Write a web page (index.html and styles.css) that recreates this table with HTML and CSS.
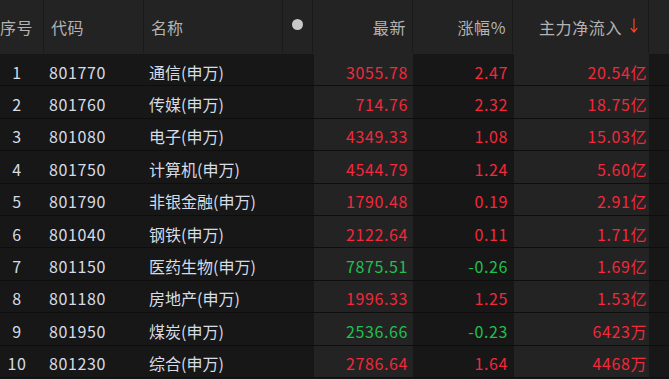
FILE: index.html
```html
<!DOCTYPE html>
<html lang="zh-CN">
<head>
<meta charset="utf-8">
<title>板块资金流向</title>
<link rel="stylesheet" href="styles.css">
</head>
<body>
<div class="board">
  <div class="head">
    <div class="hc c-idx">序号</div>
    <div class="hc c-code">代码</div>
    <div class="hc c-name">名称</div>
    <div class="hc c-dot"><span class="dot"></span></div>
    <div class="hc c-num">最新</div>
    <div class="hc c-num">涨幅%</div>
    <div class="hc c-flow">主力净流入<svg class="arrow" width="8" height="15" viewBox="0 0 8 15"><path d="M4 0.5V14M0.8 10.2L4 14L7.2 10.2" fill="none" stroke="#ff4422" stroke-width="1.2"/></svg></div>
    <div class="hc c-end"></div>
  </div>

  <div class="row"><div class="c c-idx">1</div><div class="c c-code">801770</div><div class="c c-name">通信(申万)</div><div class="c"></div><div class="c c-num hl up">3055.78</div><div class="c c-num up">2.47</div><div class="c c-flow hl up">20.54亿</div><div class="c"></div></div>
  <div class="row"><div class="c c-idx">2</div><div class="c c-code">801760</div><div class="c c-name">传媒(申万)</div><div class="c"></div><div class="c c-num hl up">714.76</div><div class="c c-num up">2.32</div><div class="c c-flow hl up">18.75亿</div><div class="c"></div></div>
  <div class="row"><div class="c c-idx">3</div><div class="c c-code">801080</div><div class="c c-name">电子(申万)</div><div class="c"></div><div class="c c-num hl up">4349.33</div><div class="c c-num up">1.08</div><div class="c c-flow hl up">15.03亿</div><div class="c"></div></div>
  <div class="row"><div class="c c-idx">4</div><div class="c c-code">801750</div><div class="c c-name">计算机(申万)</div><div class="c"></div><div class="c c-num hl up">4544.79</div><div class="c c-num up">1.24</div><div class="c c-flow hl up">5.60亿</div><div class="c"></div></div>
  <div class="row"><div class="c c-idx">5</div><div class="c c-code">801790</div><div class="c c-name">非银金融(申万)</div><div class="c"></div><div class="c c-num hl up">1790.48</div><div class="c c-num up">0.19</div><div class="c c-flow hl up">2.91亿</div><div class="c"></div></div>
  <div class="row"><div class="c c-idx">6</div><div class="c c-code">801040</div><div class="c c-name">钢铁(申万)</div><div class="c"></div><div class="c c-num hl up">2122.64</div><div class="c c-num up">0.11</div><div class="c c-flow hl up">1.71亿</div><div class="c"></div></div>
  <div class="row"><div class="c c-idx">7</div><div class="c c-code">801150</div><div class="c c-name">医药生物(申万)</div><div class="c"></div><div class="c c-num hl down">7875.51</div><div class="c c-num down">-0.26</div><div class="c c-flow hl up">1.69亿</div><div class="c"></div></div>
  <div class="row"><div class="c c-idx">8</div><div class="c c-code">801180</div><div class="c c-name">房地产(申万)</div><div class="c"></div><div class="c c-num hl up">1996.33</div><div class="c c-num up">1.25</div><div class="c c-flow hl up">1.53亿</div><div class="c"></div></div>
  <div class="row"><div class="c c-idx">9</div><div class="c c-code">801950</div><div class="c c-name">煤炭(申万)</div><div class="c"></div><div class="c c-num hl down">2536.66</div><div class="c c-num down">-0.23</div><div class="c c-flow hl up">6423万</div><div class="c"></div></div>
  <div class="row"><div class="c c-idx">10</div><div class="c c-code">801230</div><div class="c c-name">综合(申万)</div><div class="c"></div><div class="c c-num hl up">2786.64</div><div class="c c-num up">1.64</div><div class="c c-flow hl up">4468万</div><div class="c"></div></div>
</div>
</body>
</html>
```

FILE: styles.css
```css
* { box-sizing: border-box; }
html, body {
  margin: 0;
  padding: 0;
  background: #171717;
}
body {
  width: 669px;
  height: 379px;
  overflow: hidden;
  font-family: "Noto Sans CJK SC", "Noto Sans", sans-serif;
  font-size: 16px;
}
.board {
  display: flex;
  flex-direction: column;
}
.head, .row {
  display: grid;
  grid-template-columns: 44px 100px 139px 30px 100px 100px 136px 20px;
}
.head {
  height: 54px;
  background: #232323;
  padding-bottom: 1px;
}
.hc {
  display: flex;
  align-items: center;
  color: #b4b4b4;
  border-right: 1px solid #1a1a1a;
  white-space: nowrap;
  overflow: hidden;
}
.hc.c-end { border-right: none; }
.hc.c-idx { justify-content: center; padding-right: 10px; }
.hc.c-code, .hc.c-name { padding-left: 7px; }
.hc.c-dot { justify-content: center; }
.hc.c-num { justify-content: flex-end; padding-right: 6px; }
.hc.c-flow { justify-content: flex-end; padding-right: 10px; }
.dot {
  width: 11px;
  height: 11px;
  border-radius: 50%;
  background: #c8c8c8;
  margin-top: -4px;
}
.arrow { margin-left: 8px; margin-top: -2px; }

.row {
  height: 32.4px;
  border-bottom: 1px solid #0e0e0e;
  background: #171717;
}
.c {
  display: flex;
  align-items: center;
  padding-top: 4px;
  color: #d6dce6;
  white-space: nowrap;
}
.c-idx { justify-content: center; padding-right: 10px; }
.c-code, .c-name { padding-left: 5px; }
.c-code, .c-idx, .c-num, .c-flow { letter-spacing: 0.6px; }
.c-num { justify-content: flex-end; padding-right: 5px; }
.c-flow { justify-content: flex-end; padding-right: 2px; }
.hl {
  background: #232323;
  border-left: 1px solid #171717;
}
.up { color: #f2283b; }
.down { color: #20c050; }
```
